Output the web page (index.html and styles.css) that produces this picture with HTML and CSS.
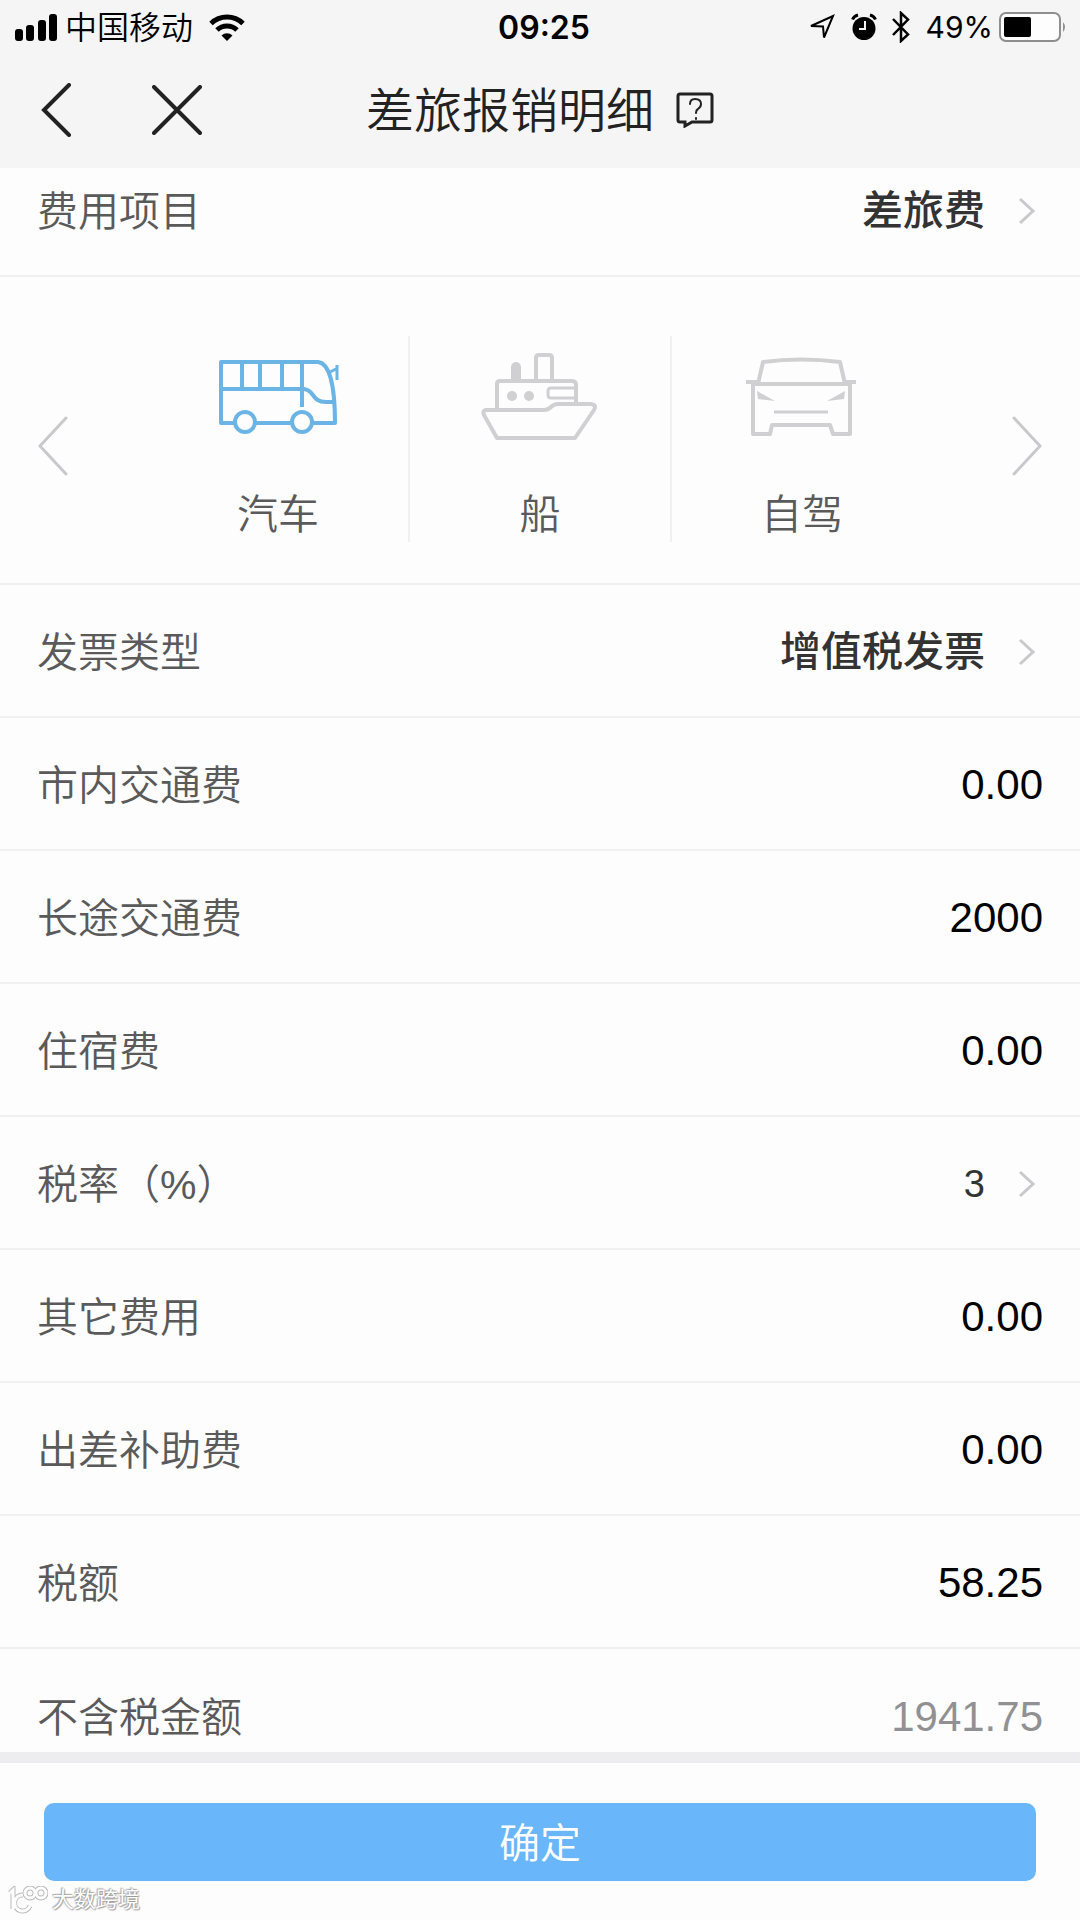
FILE: index.html
```html
<!DOCTYPE html>
<html lang="zh-CN">
<head>
<meta charset="utf-8">
<meta name="viewport" content="width=device-width, initial-scale=1">
<title>差旅报销明细</title>
<link rel="stylesheet" href="styles.css">
</head>
<body>
<div class="page">

	<div class="status-bar">
		<div class="status-left">
			<svg class="signal" width="42" height="27" viewBox="0 0 42 27">
				<rect x="0" y="15" width="8" height="12" rx="3"/>
				<rect x="11" y="11" width="8" height="16" rx="3"/>
				<rect x="23" y="6" width="8" height="21" rx="3"/>
				<rect x="34" y="0" width="8" height="27" rx="3"/>
			</svg>
			<span class="carrier">中国移动</span>
			<svg class="wifi" width="36" height="27" viewBox="0 0 36 27">
				<path d="M2 9.500a23 23 0 0 1 32 0" fill="none" stroke="#000" stroke-width="5"/>
				<path d="M8 16a14.500 14.500 0 0 1 20 0" fill="none" stroke="#000" stroke-width="5"/>
				<path d="M12.500 21.500a8 8 0 0 1 11 0L18 27z"/>
			</svg>
		</div>
		<span class="time">09:25</span>
		<div class="status-right">
			<svg class="location" width="28" height="28" viewBox="0 0 28 28">
				<path d="M3 13L25 3L16 24.500L15 13.500z" fill="none" stroke="#000" stroke-width="2"/>
			</svg>
			<svg class="alarm" width="26" height="28" viewBox="0 0 26 28">
				<circle cx="13" cy="15.500" r="11.500"/>
				<path d="M1.500 6.500Q3 3 7 2M24.500 6.500Q23 3 19 2" fill="none" stroke="#000" stroke-width="3"/>
				<path d="M14 8v8H8" fill="none" stroke="#f5f5f5" stroke-width="2"/>
			</svg>
			<svg class="bluetooth" width="18" height="32" viewBox="0 0 18 32">
				<path d="M1 8l15 15.500L9 30V2l7 6.500L1 24" fill="none" stroke="#000" stroke-width="2.500"/>
			</svg>
			<span class="percent">49%</span>
			<svg class="battery" width="68" height="30" viewBox="0 0 68 30">
				<rect x="1" y="1" width="60" height="28" rx="6" fill="#fdfdfd" stroke="#8e8e8e" stroke-width="2"/>
				<rect x="5" y="5" width="27" height="20" rx="2"/>
				<path d="M64 10q4 5 0 10z" fill="#8e8e8e"/>
			</svg>
		</div>
	</div>

	<header class="nav-bar">
		<div class="nav-buttons">
			<button type="button" class="icon-button" aria-label="返回">
				<svg width="32" height="54" viewBox="0 0 32 54"><path d="M29 2L4 27L29 52"/></svg>
			</button>
			<button type="button" class="icon-button" aria-label="关闭">
				<svg width="50" height="50" viewBox="0 0 50 50"><path d="M2 2L48 48M48 2L2 48"/></svg>
			</button>
		</div>
		<div class="title-group">
			<h1 class="title">差旅报销明细</h1>
			<button type="button" class="icon-button help" aria-label="帮助">
				<svg width="38" height="36" viewBox="0 0 38 36">
					<path d="M4 2H34Q36 2 36 4V28Q36 30 34 30H16L9 34V30H4Q2 30 2 28V4Q2 2 4 2z"/>
					<path class="thin" d="M14 12Q14 7 19 7Q25 7 25 12Q25 15 22 17Q20 18 20 21M20 26v1"/>
				</svg>
			</button>
		</div>
	</header>

	<form class="detail">
		<div class="row row-first">
			<label for="item">费用项目</label>
			<select id="item" class="picker"><option>差旅费</option></select>
			<svg class="arrow" width="18" height="28" viewBox="0 0 18 28"><path d="M2 2L15 14L2 26"/></svg>
		</div>

		<div class="vehicles">
			<button type="button" class="slide slide-prev" aria-label="上一个">
				<svg width="30" height="60" viewBox="0 0 30 60"><path d="M28 2L2 30L28 58"/></svg>
			</button>
			<div class="vehicle-list">
				<button type="button" class="vehicle active">
					<svg width="124" height="92" viewBox="0 0 124 92">
						<path d="M19 73H5V12H102C113 13 119 34 119 73H96M39 73H76"/>
						<path d="M26 12V39M44 12V39M66 12V39M86 12V57M5 39H88C99 40 95 52 110 52H118"/>
						<path d="M114 22L120 19M121 15V30" stroke-width="3"/>
						<circle cx="29" cy="72" r="10"/>
						<circle cx="86" cy="72" r="10"/>
					</svg>
					<span>汽车</span>
				</button>
				<button type="button" class="vehicle">
					<svg width="124" height="92" viewBox="0 0 124 92">
						<path d="M8 60H66Q70 60 73 57Q76 54 80 54H113Q119 55 116 60L97 88H19L6 65Q4 61 8 60z"/>
						<path d="M19 60V34Q19 31 22 31H94Q98 31 98 35V54"/>
						<path d="M58 31V8Q58 5 61 5H71Q74 5 74 8V31"/>
						<path d="M98 38H73Q70 38 70 41V45Q70 48 73 48H98" stroke-width="3"/>
						<path class="solid" d="M33 31V17a5 5 0 0 1 10 0V31z"/>
						<circle class="solid" cx="34" cy="46" r="5"/>
						<circle class="solid" cx="51" cy="46" r="5"/>
					</svg>
					<span>船</span>
				</button>
				<button type="button" class="vehicle">
					<svg width="124" height="92" viewBox="0 0 124 92">
						<path d="M18 34L23 12Q61 7 100 12L105 34"/>
						<path d="M6 32H18M105 32H116"/>
						<path d="M13 34H110V84H93L90 75H32L30 84H13z"/>
						<path d="M34 62H88" stroke-width="3"/>
						<path class="solid" d="M17 41L35 51L18 49zM105 41L87 51L104 49z"/>
					</svg>
					<span>自驾</span>
				</button>
			</div>
			<button type="button" class="slide slide-next" aria-label="下一个">
				<svg width="30" height="60" viewBox="0 0 30 60"><path d="M2 2L28 30L2 58"/></svg>
			</button>
		</div>

		<div class="row">
			<label for="invoice">发票类型</label>
			<select id="invoice" class="picker"><option>增值税发票</option></select>
			<svg class="arrow" width="18" height="28" viewBox="0 0 18 28"><path d="M2 2L15 14L2 26"/></svg>
		</div>
		<div class="row">
			<label for="city">市内交通费</label>
			<input id="city" type="text" value="0.00">
		</div>
		<div class="row">
			<label for="long">长途交通费</label>
			<input id="long" type="text" value="2000">
		</div>
		<div class="row">
			<label for="hotel">住宿费</label>
			<input id="hotel" type="text" value="0.00">
		</div>
		<div class="row">
			<label for="rate">税率（%）</label>
			<select id="rate" class="picker picker-rate"><option>3</option></select>
			<svg class="arrow" width="18" height="28" viewBox="0 0 18 28"><path d="M2 2L15 14L2 26"/></svg>
		</div>
		<div class="row">
			<label for="other">其它费用</label>
			<input id="other" type="text" value="0.00">
		</div>
		<div class="row">
			<label for="allowance">出差补助费</label>
			<input id="allowance" type="text" value="0.00">
		</div>
		<div class="row">
			<label for="tax">税额</label>
			<input id="tax" type="text" value="58.25">
		</div>
		<div class="row row-last">
			<label for="net">不含税金额</label>
			<input id="net" type="text" value="1941.75" readonly>
		</div>

		<div class="footer">
			<button type="submit" class="submit">确定</button>
		</div>
	</form>

	<div class="watermark">
		<svg width="40" height="28" viewBox="0 0 40 28">
			<g class="mark-edge">
				<path d="M2 7L5 4V23M15 9A8 8 0 1 0 22 20"/>
				<circle cx="22" cy="7" r="5"/><circle cx="33" cy="7" r="5"/>
			</g>
			<g class="mark-line">
				<path d="M2 7L5 4V23M15 9A8 8 0 1 0 22 20"/>
				<circle cx="22" cy="7" r="5"/><circle cx="33" cy="7" r="5"/>
			</g>
		</svg>
		<span>大数跨境</span>
	</div>

</div>
</body>
</html>
```

FILE: styles.css
```css
* {
	box-sizing: border-box;
}

body {
	margin: 0;
	background: #fdfdfe;
	color: #000;
	font-family: "Liberation Sans", "Noto Sans CJK SC", sans-serif;
	font-size: 42px;
}

button, input, select {
	margin: 0;
	padding: 0;
	border: 0;
	background: transparent;
	color: inherit;
	font: inherit;
}

svg {
	display: block;
	flex: none;
}

.page {
	position: relative;
	min-height: 100vh;
}

/* status bar */
.status-bar {
	display: grid;
	grid-template-columns: 1fr auto 1fr;
	align-items: center;
	height: 54px;
	padding: 0 13px 0 15px;
	background: #f5f5f5;
	font-family: Inter, "Noto Sans CJK SC", sans-serif;
	font-size: 30px;
}

.status-left, .status-right {
	display: flex;
	align-items: center;
}

.status-right {
	justify-content: flex-end;
}

.carrier {
	margin: 0 16px 0 8px;
	padding-top: 2px;
	font-size: 32px;
	font-weight: 350;
	line-height: 40px;
}

.time {
	margin-left: 6px;
	font-size: 32px;
	font-weight: 600;
}

.alarm {
	margin: 0 15px;
}

.percent {
	margin: 0 6px 0 16px;
}

/* title bar */
.nav-bar {
	display: grid;
	grid-template-columns: 1fr auto 1fr;
	align-items: center;
	height: 114px;
	padding: 0 40px 2px;
	background: #f5f5f5;
	color: #222;
}

.nav-buttons, .title-group {
	display: flex;
	align-items: center;
}

.nav-buttons {
	gap: 80px;
}

.title-group {
	gap: 22px;
}

.icon-button path {
	fill: none;
	stroke: #222;
	stroke-width: 4;
	stroke-linecap: round;
}

.title {
	margin: 0;
	padding-top: 4px;
	font-size: 48px;
	font-weight: 350;
	line-height: 60px;
}

.help path {
	stroke-width: 3;
}

.help .thin {
	stroke-width: 2;
}

/* rows */
.row {
	display: flex;
	align-items: center;
	min-height: 133px;
	padding: 2px 37px 0;
	border-bottom: 2px solid #f0eff1;
}

.row-first {
	min-height: 109px;
	padding-bottom: 24px;
}

.row-last {
	min-height: 114px;
	padding-top: 32px;
	border-bottom: 11px solid #edecee;
}

.row label {
	padding-top: 2px;
	color: #5a5a5a;
	font-size: 41px;
	font-weight: 350;
	line-height: 60px;
}

.row input {
	flex: 1;
	min-width: 0;
	height: 60px;
	text-align: right;
	outline: 0;
}

.row input[readonly] {
	color: #919193;
}

.picker {
	margin-left: auto;
	height: 60px;
	appearance: none;
	color: #333;
	font-size: 41px;
	font-weight: 500;
	text-align: right;
}

.picker-rate {
	font-size: 38px;
	font-weight: 400;
}

.arrow {
	margin: 0 7px 0 33px;
}

.arrow path {
	fill: none;
	stroke: #c9c9cb;
	stroke-width: 3;
}

/* vehicle slider */
.vehicles {
	display: flex;
	padding: 59px 37px 41px;
	border-bottom: 2px solid #f0eff1;
}

.slide {
	width: 111px;
	padding: 14px 1px 0;
}

.slide path {
	fill: none;
	stroke: #c9c9cb;
	stroke-width: 3;
	stroke-linecap: round;
}

.slide-next svg {
	margin-left: auto;
}

.vehicle-list {
	display: flex;
	flex: 1;
}

.vehicle {
	display: flex;
	flex: 1;
	flex-direction: column;
	align-items: center;
	gap: 46px;
	padding-top: 14px;
	color: #5a5a5a;
	font-size: 41px;
	font-weight: 350;
	line-height: 54px;
}

.vehicle + .vehicle {
	border-left: 2px solid #f0eff1;
}

.vehicle svg {
	fill: none;
	stroke: #d0d0d2;
	stroke-width: 4;
	stroke-linejoin: round;
}

.vehicle .solid {
	fill: #d0d0d2;
	stroke: none;
}

.vehicle.active svg {
	stroke: #6bb4e6;
}

/* footer */
.footer {
	padding: 40px 44px 39px;
}

.submit {
	display: block;
	width: 100%;
	height: 78px;
	padding-top: 4px;
	border-radius: 10px;
	background: #6ab6fb;
	color: #fff;
	font-size: 41px;
	font-weight: 350;
	line-height: 60px;
}

.watermark {
	position: absolute;
	left: 8px;
	bottom: 5px;
	display: flex;
	align-items: center;
	gap: 4px;
	color: #fff;
	font-size: 22px;
	line-height: 30px;
	text-shadow: 0 0 2px #888, 1px 1px 1px #aaa, -1px -1px 1px #bbb;
}

.watermark svg {
	fill: none;
}

.mark-edge {
	stroke: #bbb;
	stroke-width: 5;
}

.mark-line {
	stroke: #fff;
	stroke-width: 3;
}
```
